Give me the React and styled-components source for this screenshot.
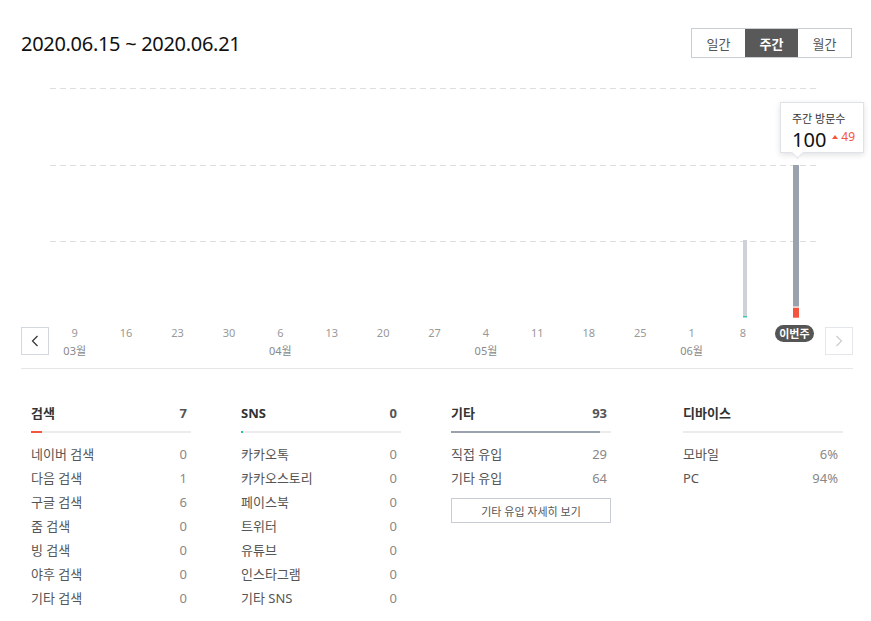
import React, { useState } from "react";
import styled, { createGlobalStyle } from "styled-components";

const GlobalStyle = createGlobalStyle`
  body {
    margin: 0;
    background: #fff;
    font-family: "Noto Sans", "Noto Sans CJK KR", sans-serif;
    color: #333;
  }
`;

const Page = styled.div`
  width: 832px;
  padding: 28px 18px 0 21px;
`;

const Header = styled.div`
  display: flex;
  justify-content: space-between;
  align-items: center;
  height: 30px;
`;

const Title = styled.h1`
  margin: 0;
  font-size: 20px;
  font-weight: 400;
  color: #111;
  letter-spacing: -0.3px;
  line-height: 30px;
  padding-top: 2px;
`;

const Segments = styled.div`
  display: flex;
  border: 1px solid #c8cdd6;
  margin-right: 1px;
`;

const Segment = styled.button`
  width: 53px;
  height: 28px;
  border: none;
  padding: 0;
  font-family: inherit;
  font-size: 13px;
  background: ${p => (p.active ? "#595959" : "#fff")};
  color: ${p => (p.active ? "#fff" : "#555")};
  font-weight: ${p => (p.active ? 700 : 400)};
  cursor: pointer;
`;

const Chart = styled.div`
  position: relative;
  height: 260px;
`;

const Tooltip = styled.div`
  position: absolute;
  left: 759px;
  top: 44px;
  width: 84px;
  height: 51px;
  box-sizing: border-box;
  padding: 8px 0 0 11px;
  background: #fff;
  border: 1px solid #dfe2e8;
  box-shadow: 0 2px 6px rgba(0, 0, 0, 0.12);
  &::after {
    content: "";
    position: absolute;
    left: 12px;
    bottom: -5px;
    width: 8px;
    height: 8px;
    background: #fff;
    transform: rotate(45deg);
    border-right: 1px solid #dfe2e8;
    border-bottom: 1px solid #dfe2e8;
  }
`;

const TipLabel = styled.div`
  font-size: 11px;
  color: #333;
  line-height: 16px;
`;

const TipValue = styled.div`
  display: flex;
  align-items: center;
  margin-top: 2px;
  line-height: 22px;
  font-size: 20px;
  color: #111;
  > span {
    margin-left: 6px;
    font-size: 12px;
    color: #f5543e;
    display: flex;
    align-items: center;
    margin-top: -6px;
  }
  > span::before {
    content: "";
    border-left: 3px solid transparent;
    border-right: 3px solid transparent;
    border-bottom: 4px solid #f5543e;
    margin-right: 3px;
  }
`;

const Axis = styled.div`
  display: flex;
  margin-top: 9px;
  padding-bottom: 11px;
  border-bottom: 1px solid #e6e6e6;
`;

const Ticks = styled.div`
  flex: 1;
  display: flex;
  margin-right: 5px;
`;

const NavButton = styled.button`
  width: 28px;
  height: 28px;
  flex: none;
  padding: 0;
  display: flex;
  align-items: center;
  justify-content: center;
  background: #fff;
  border: 1px solid ${p => (p.disabled ? "#e3e6eb" : "#d3d7de")};
  color: ${p => (p.disabled ? "#ccc" : "#333")};
`;

const Tick = styled.div`
  flex: 1;
  display: flex;
  flex-direction: column;
  align-items: center;
  font-size: 11px;
  color: #999;
`;

const TickNum = styled.div`
  height: 12px;
  line-height: 12px;
`;

const Pill = styled.div`
  margin-top: -2px;
  height: 17px;
  line-height: 17px;
  padding: 0 4px;
  border-radius: 9px;
  background: #555;
  color: #fff;
  font-weight: 700;
  font-size: 11px;
`;

const Month = styled.div`
  margin-top: 6px;
  line-height: 12px;
  color: #888;
`;

const Stats = styled.div`
  display: grid;
  grid-template-columns: 210px 210px 232px 160px;
  padding: 34px 0 0 10px;
`;

const Block = styled.div`
  width: 160px;
`;

const BlockHead = styled.div`
  display: flex;
  justify-content: space-between;
  padding-right: ${p => p.pr || 4}px;
  line-height: 20px;
  font-size: 13px;
  font-weight: 700;
  color: #333;
  > span:last-child {
    color: #555;
  }
`;

const Track = styled.div`
  margin-top: 8px;
  height: 2px;
  background: #ececec;
  margin-bottom: 9px;
  > div {
    height: 2px;
  }
`;

const Row = styled.div`
  display: flex;
  justify-content: space-between;
  height: 24px;
  line-height: 24px;
  font-size: 13px;
  color: #555;
  padding-right: ${p => p.pr || 4}px;
  > span:last-child {
    color: #888;
  }
`;

const MoreButton = styled.button`
  margin-top: 8px;
  width: 160px;
  height: 25px;
  background: #fff;
  border: 1px solid #c8ccd4;
  font-family: inherit;
  font-size: 11px;
  color: #555;
  padding: 0;
`;

const ticks = [
  ["9", "03월"], ["16"], ["23"], ["30"], ["6", "04월"], ["13"], ["20"], ["27"],
  ["4", "05월"], ["11"], ["18"], ["25"], ["1", "06월"], ["8"], ["이번주"],
];

const blocks = [
  {
    title: "검색", total: 7, color: "#f5543e", fill: 7,
    rows: [["네이버 검색", 0], ["다음 검색", 1], ["구글 검색", 6], ["줌 검색", 0], ["빙 검색", 0], ["야후 검색", 0], ["기타 검색", 0]],
  },
  {
    title: "SNS", total: 0, color: "#27c2a5", fill: 1.5,
    rows: [["카카오톡", 0], ["카카오스토리", 0], ["페이스북", 0], ["트위터", 0], ["유튜브", 0], ["인스타그램", 0], ["기타 SNS", 0]],
  },
  {
    title: "기타", total: 93, color: "#9aa3ad", fill: 93,
    rows: [["직접 유입", 29], ["기타 유입", 64]], more: true,
  },
  {
    title: "디바이스", total: "", color: "#ececec", fill: 0, pr: 5,
    rows: [["모바일", "6%"], ["PC", "94%"]],
  },
];

const Chevron = ({ dir }) => (
  <svg width="8" height="12" viewBox="0 0 8 12" fill="none">
    <path
      d={dir === "left" ? "M6.5 1L1.5 6l5 5" : "M1.5 1l5 5-5 5"}
      stroke="currentColor"
      strokeWidth="1.2"
    />
  </svg>
);

export default function App() {
  const [period, setPeriod] = useState("주간");
  return (
    <Page>
      <GlobalStyle />
      <Header>
        <Title>2020.06.15 ~ 2020.06.21</Title>
        <Segments>
          {["일간", "주간", "월간"].map(p => (
            <Segment key={p} active={period === p} onClick={() => setPeriod(p)}>
              {p}
            </Segment>
          ))}
        </Segments>
      </Header>

      <Chart>
        <svg width="832" height="260">
          {[30, 107, 183].map(y => (
            <line key={y} x1="29" x2="799" y1={y + 0.5} y2={y + 0.5} stroke="#dedede" strokeDasharray="6 4" />
          ))}
          <rect x="722" y="182" width="4" height="76" fill="#cfd3d8" />
          <rect x="722" y="258" width="4" height="1.5" fill="#3fc9b0" />
          <rect x="772" y="107" width="6" height="141.5" fill="#9aa3ad" />
          <rect x="772" y="249.7" width="6" height="10" fill="#f5543e" />
        </svg>
        <Tooltip>
          <TipLabel>주간 방문수</TipLabel>
          <TipValue>
            100<span>49</span>
          </TipValue>
        </Tooltip>
      </Chart>

      <Axis>
        <NavButton>
          <Chevron dir="left" />
        </NavButton>
        <Ticks>
          {ticks.map(([n, m], i) => (
            <Tick key={i}>
              {n === "이번주" ? <Pill>{n}</Pill> : <TickNum>{n}</TickNum>}
              {m && <Month>{m}</Month>}
            </Tick>
          ))}
        </Ticks>
        <NavButton disabled>
          <Chevron dir="right" />
        </NavButton>
      </Axis>

      <Stats>
        {blocks.map(b => (
          <Block key={b.title}>
            <BlockHead pr={b.pr}>
              <span>{b.title}</span>
              <span>{b.total}</span>
            </BlockHead>
            <Track>
              <div style={{ width: `${b.fill}%`, background: b.color }} />
            </Track>
            {b.rows.map(([label, value]) => (
              <Row key={label} pr={b.pr}>
                <span>{label}</span>
                <span>{value}</span>
              </Row>
            ))}
            {b.more && <MoreButton>기타 유입 자세히 보기</MoreButton>}
          </Block>
        ))}
      </Stats>
    </Page>
  );
}
